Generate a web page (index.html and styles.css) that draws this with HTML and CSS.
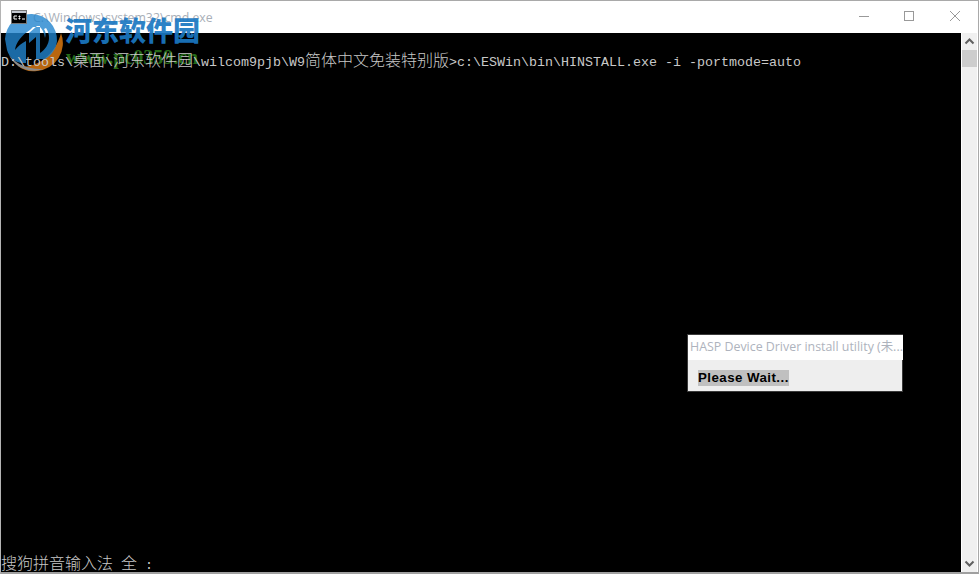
FILE: index.html
```html
<!DOCTYPE html>
<html lang="zh">
<head>
<meta charset="utf-8">
<title>cmd.exe</title>
<link rel="stylesheet" href="styles.css">
</head>
<body>
<div class="window">
  <header class="titlebar">
    <svg class="app-icon" width="16" height="14" viewBox="0 0 16 14"><rect x=".5" y=".5" width="15" height="13" fill="#000" stroke="#777"/><rect x="1" y="1" width="14" height="2" fill="#c4c8d0"/><path d="M3 6h3M3 6v3h3M8 6h.9v1H8zM8 8h.9v1H8zM11 9h3" stroke="#fff" fill="none"/></svg>
    <span class="title">C:\Windows\system32\cmd.exe</span>
    <div class="controls">
      <svg width="46" height="32" viewBox="0 0 46 32"><path d="M19 15.500h10" stroke="#999"/></svg>
      <svg width="46" height="32" viewBox="0 0 46 32"><rect x="18.500" y="10.500" width="9" height="9" fill="none" stroke="#999"/></svg>
      <svg width="46" height="32" viewBox="0 0 46 32"><path d="M18 10l10 10M28 10l-10 10" stroke="#999" fill="none"/></svg>
    </div>
  </header>
  <div class="client">
    <main class="console">
      <div class="line">D:\tools\<span class="cjk">桌面</span>\<span class="cjk">河东软件园</span>\wilcom9pjb\W9<span class="cjk">简体中文免装特别版</span>&gt;c:\ESWin\bin\HINSTALL.exe -i -portmode=auto</div>
      <div class="line ime"><span class="cjk">搜狗拼音输入法</span> <span class="cjk">全</span> :</div>
    </main>
    <aside class="scrollbar">
      <svg class="arrow" width="15" height="17" viewBox="0 0 15 17"><path d="M3.500 10.500l4-4 4 4" stroke="#606060" stroke-width="2" fill="none"/></svg>
      <div class="thumb"></div>
      <svg class="arrow end" width="15" height="17" viewBox="0 0 15 17"><path d="M3.500 6.500l4 4 4-4" stroke="#606060" stroke-width="2" fill="none"/></svg>
    </aside>
  </div>
</div>

<section class="dialog">
  <div class="dialog-title">HASP Device Driver install utility (未...</div>
  <div class="dialog-body"><span class="wait">Please Wait...</span></div>
</section>

<div class="watermark">
  <svg class="wm-logo" width="64" height="64" viewBox="0 0 64 64">
    <path d="M58 24a28 28 0 0 1-24 38c-8 1-14-1-19-5 18 4 38-12 43-33z" fill="#b9660f"/>
    <path d="M6 46c2 4 5 8 9 11 8 5 18 6 25 3-14 1-27-5-34-14z" fill="#8b8b8b"/>
    <path fill="#2285ce" opacity=".8" fill-rule="evenodd" d="M2 30a26 26 0 1 1 52 2c-1 8-5 14-12 18H33V28l-7 6V24l8-7h3v27c5-3 9-9 9-15 0-4-1-7-3-10l-2 1c2 3 2 6 1 9-1-6-3-9-5-11h-7l-3 3c-8 5-14 12-15 20 3-4 7-7 11-9v22h-3c-8 0-14-6-16-13z"/>
  </svg>
  <div class="wm-name">河东软件园</div>
  <div class="wm-url">www.pc0359.cn</div>
</div>
</body>
</html>
```
FILE: styles.css
```css
html, body {
  margin: 0;
  padding: 0;
  background: #000;
  overflow: hidden;
}

body {
  width: 979px;
  height: 574px;
  position: relative;
}

.window {
  box-sizing: border-box;
  width: 979px;
  height: 574px;
  display: flex;
  flex-direction: column;
  background: #fff;
  border: 1px solid #a9a9a9;
  border-left-color: #b4b4b4;
  border-bottom-width: 2px;
  border-bottom-color: #a0a0a0;
}

.titlebar {
  flex: none;
  height: 32px;
  display: flex;
  align-items: center;
  padding-left: 10px;
  background: #fff;
}

.app-icon {
  flex: none;
  margin-top: -1px;
  position: relative;
  z-index: 2;
}

.title {
  margin-left: 6px;
  font: 12.300px "Open Sans", "Liberation Sans", sans-serif;
  color: #a9afb8;
}

.controls {
  margin-left: auto;
  display: flex;
}

.client {
  flex: 1;
  min-height: 0;
  display: flex;
}

.console {
  flex: 1;
  min-width: 0;
  background: #000;
  display: flex;
  flex-direction: column;
  justify-content: space-between;
  padding-top: 18px;
  margin-right: 1px;
  color: #c8c8c8;
  font: 13.340px/16px "Liberation Mono", "Noto Sans CJK SC", monospace;
  white-space: pre;
}

.line {
  height: 16px;
  position: relative;
  z-index: 2;
}

.ime {
  height: 18px;
}

.cjk {
  font: 300 16px/16px "Noto Sans CJK SC", sans-serif;
}

.scrollbar {
  flex: none;
  width: 15px;
  background: #f0f0f0;
  display: flex;
  flex-direction: column;
  margin-right: 1px;
}

.arrow {
  flex: none;
  display: block;
}

.arrow.end {
  margin-top: auto;
}

.thumb {
  height: 17px;
  background: #cdcdcd;
}

.dialog {
  position: absolute;
  left: 687px;
  top: 334px;
  width: 216px;
  height: 58px;
  box-sizing: border-box;
  background: #eeeeee;
  border: 1px solid #3a3a3a;
  font-family: "Liberation Sans", sans-serif;
}

.dialog-title {
  height: 25px;
  margin-right: -1px;
  padding-left: 2px;
  background: #fff;
  color: #aeb3bd;
  font: 12.400px/23px "Open Sans", "Noto Sans CJK SC", sans-serif;
  white-space: nowrap;
  overflow: hidden;
}

.dialog-body {
  padding: 10px 0 0 10px;
}

.wait {
  display: block;
  width: 91px;
  height: 16px;
  background: #c0c0c0;
  color: #000;
  font: bold 13.300px/16px "Liberation Sans", sans-serif;
  letter-spacing: .45px;
  white-space: nowrap;
}

.watermark {
  position: absolute;
  left: 0;
  top: 0;
  width: 210px;
  height: 72px;
  pointer-events: none;
  z-index: 1;
}

.wm-logo {
  position: absolute;
  left: 3px;
  top: 9px;
}

.wm-name {
  position: absolute;
  left: 65px;
  top: 13px;
  font: 900 27px/34px "Noto Sans CJK SC", sans-serif;
  color: #1b78c2;
  opacity: .92;
  white-space: nowrap;
}

.wm-url {
  position: absolute;
  left: 66px;
  top: 47px;
  font: bold 20px/20px "Liberation Serif", serif;
  color: #256a18;
  white-space: nowrap;
}
```
